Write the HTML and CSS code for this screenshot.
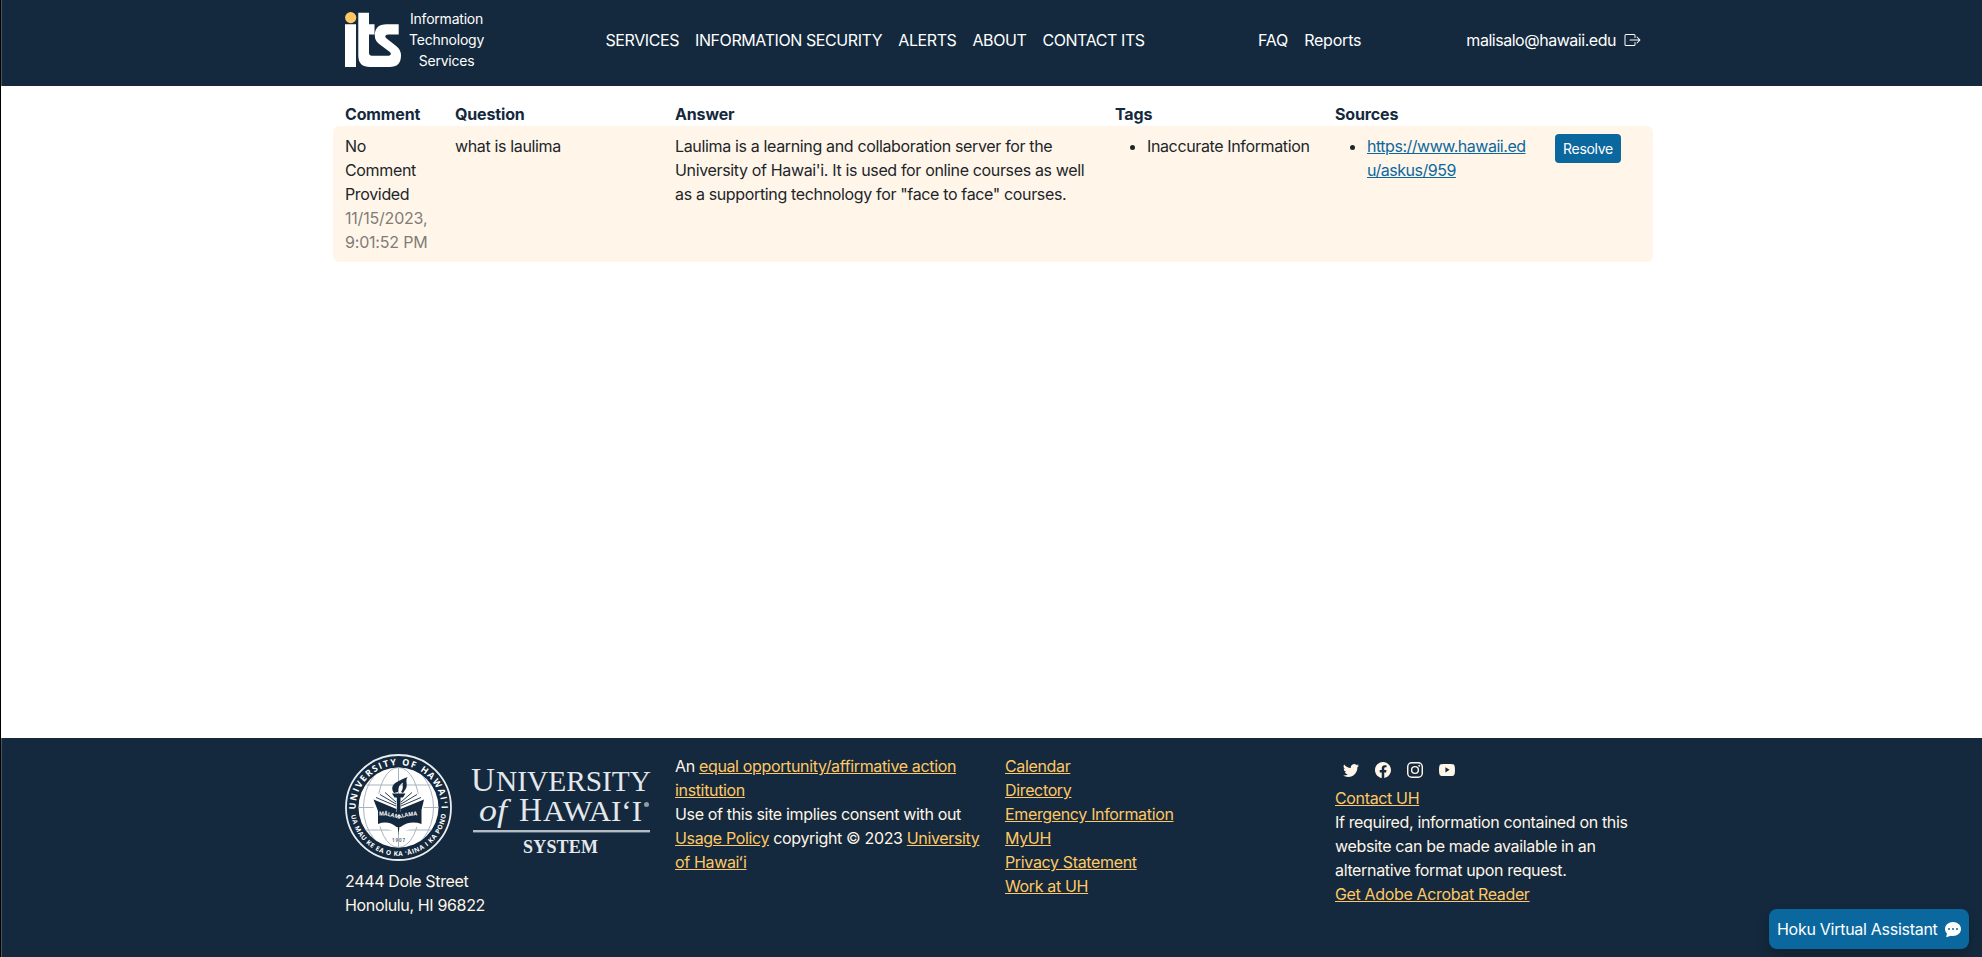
FILE: index.html
```html
<!DOCTYPE html>
<html lang="en">
<head>
<meta charset="utf-8">
<title>ITS Reports</title>
<link rel="stylesheet" href="styles.css">
</head>
<body>
<header class="site-header">
  <div class="container header-row">
    <a class="brand" href="#">
      <svg class="brand-logo" width="57" height="56" viewBox="0 0 57 56" aria-hidden="true">
        <circle cx="5.7" cy="5.6" r="5.6" fill="#ffc864"/>
        <path fill="#fff" d="M0 12.3H11V55H0zM13.3 0.7H24V12.3H29.5V22.5H24V40.5Q24 43.8 27 43.8H42.5Q45.8 43.8 45.8 41.8 45.8 40.8 44.5 39.8L33.5 31.5Q29.8 28.300 29.800 23.500 29.800 12.300 41.500 12.300H53.700V22.500H43.300Q40.300 22.500 40.300 24.500 40.300 25.600 41.600 26.600L51.500 34.200Q56 37.700 56 43.500 56 55 44.500 55H25Q13.300 55 13.300 43.500z"/>
      </svg>
      <span class="brand-text">Information<br>Technology<br>Services</span>
    </a>
    <nav class="main-nav">
      <a href="#">SERVICES</a><a href="#">INFORMATION SECURITY</a><a href="#">ALERTS</a><a href="#">ABOUT</a><a href="#">CONTACT ITS</a>
    </nav>
    <nav class="app-nav"><a href="#">FAQ</a><a href="#">Reports</a></nav>
    <div class="account">
      <span>malisalo@hawaii.edu</span>
      <svg width="17" height="16" viewBox="0 0 16 16" fill="#fff" aria-hidden="true">
        <path fill-rule="evenodd" d="M10 12.5a.5.5 0 0 1-.5.5h-8a.5.5 0 0 1-.5-.5v-9a.5.5 0 0 1 .5-.5h8a.5.5 0 0 1 .5.5v2a.5.5 0 0 0 1 0v-2A1.500 1.500 0 0 0 9.500 2h-8A1.500 1.500 0 0 0 0 3.500v9A1.500 1.500 0 0 0 1.500 14h8a1.500 1.500 0 0 0 1.500-1.500v-2a.5.5 0 0 0-1 0z"/>
        <path fill-rule="evenodd" d="M15.854 8.354a.5.5 0 0 0 0-.708l-3-3a.5.5 0 0 0-.708.708L14.293 7.500H5.500a.5.5 0 0 0 0 1h8.793l-2.147 2.146a.5.5 0 0 0 .708.708z"/>
      </svg>
    </div>
  </div>
</header>

<main class="container reports">
  <div class="report-grid report-head">
    <div>Comment</div><div>Question</div><div>Answer</div><div>Tags</div><div>Sources</div><div></div>
  </div>
  <div class="report-grid report-row">
    <div>No Comment Provided <span class="date">11/15/2023, 9:01:52 PM</span></div>
    <div>what is laulima</div>
    <div>Laulima is a learning and collaboration server for the University of Hawai'i. It is used for online courses as well as a supporting technology for "face to face" courses.</div>
    <div><ul><li>Inaccurate Information</li></ul></div>
    <div><ul><li><a href="#">https://www.hawaii.edu/askus/959</a></li></ul></div>
    <div><button class="resolve" type="button">Resolve</button></div>
  </div>
</main>

<footer class="site-footer">
  <div class="container footer-grid">
    <div class="uh">
      <svg class="uh-logo" width="306" height="107" viewBox="0 0 306 107" role="img" aria-label="University of Hawaii System">
        <defs>
          <path id="ring-top" d="M10.600 57A43 43 0 1 1 96.400 57"/>
          <path id="ring-bottom" d="M5.600 54A47.900 47.900 0 0 0 101.400 54"/>
          <clipPath id="disc"><circle cx="53.500" cy="53.500" r="40"/></clipPath>
        </defs>
        <circle cx="53.500" cy="53.500" r="52.500" fill="none" stroke="#e9edf0" stroke-width="1.800"/>
        <circle cx="53.500" cy="53.500" r="40" fill="#fff"/>
        <g fill="none" stroke="#a9b3bc" stroke-width="1" clip-path="url(#disc)">
          <ellipse cx="53.500" cy="53.500" rx="21" ry="40"/>
          <ellipse cx="53.500" cy="53.500" rx="35" ry="44"/>
          <path d="M53.500 13V94M13 53.500H94M18 31H89M18 76H89"/>
        </g>
        <path fill="#fff" d="M31 39L53 47 76 39 80 48 74 72 54 79 34 72 27 48z"/>
        <g fill="#14293d">
          <path d="M53.500 81L51.800 63V43.500H49.500L47 39.500H60.500L58 43.500H55.500V63z"/>
          <path d="M49 39C46 35 47 31 51 28.500 54 27 56 25.500 62.500 23 59.500 27.500 64 31 60 36L58 39 56 38C59 34 57 31 58 28.500 54 31 53 34 53 38z"/>
          <path d="M28.500 45.500L51.500 55V58L55.500 58V55L79 45.500 76.500 56V70Q65 66 55.500 73H51.500Q43 66 33 70V57z"/>
        </g>
        <path d="M31 43.500L51 52M35 40.500L51 50M40 38.500L51 48M76 43.500L56 52M72 40.500L56 50M67 38.500L56 48" stroke="#14293d" stroke-width=".9"/>
        <path id="banner" fill="none" d="M34 61.500Q43 61 54 65 64 61 75 61.500"/>
        <text class="ring-text motto"><textPath href="#banner" textLength="39" lengthAdjust="spacingAndGlyphs">MĀLAMALAMA</textPath></text>
        <text class="year" x="47" y="88" textLength="13">1907</text>
        <text class="ring-text top"><textPath href="#ring-top" startOffset="1.500" textLength="137" lengthAdjust="spacing">UNIVERSITY OF HAWAIʻI</textPath></text>
        <text class="ring-text bottom"><textPath href="#ring-bottom" startOffset="7" textLength="137" lengthAdjust="spacing">UA MAU KE EA O KA ʻĀINA I KA PONO</textPath></text>
        <g class="wordmark">
          <text y="37"><tspan x="126" font-size="34" textLength="24" lengthAdjust="spacingAndGlyphs">U</tspan><tspan x="151" font-size="29" textLength="155" lengthAdjust="spacingAndGlyphs">NIVERSITY</tspan></text>
          <text y="67"><tspan x="134" font-size="31" font-style="italic" textLength="28" lengthAdjust="spacingAndGlyphs">of</tspan><tspan x="174" font-size="34" textLength="23" lengthAdjust="spacingAndGlyphs">H</tspan><tspan x="198" font-size="29" textLength="99" lengthAdjust="spacingAndGlyphs">AWAIʻI</tspan></text>
          <text x="178" y="99" font-size="18" font-weight="700" textLength="75" lengthAdjust="spacing">SYSTEM</text>
        </g>
        <rect x="128" y="76" width="177" height="2.400" fill="#b4bdc6"/>
        <circle cx="301.500" cy="50.500" r="2.500" fill="#8f9ba6"/>
      </svg>
      <div>2444 Dole Street<br>Honolulu, HI 96822</div>
    </div>
    <div>An <a href="#">equal opportunity/affirmative action institution</a><br>Use of this site implies consent with out <a href="#">Usage Policy</a> copyright © 2023 <a href="#">University of Hawaiʻi</a></div>
    <div class="links"><a href="#">Calendar</a><a href="#">Directory</a><a href="#">Emergency Information</a><a href="#">MyUH</a><a href="#">Privacy Statement</a><a href="#">Work at UH</a></div>
    <div>
      <div class="social">
        <svg viewBox="0 0 16 16"><path d="M5.026 15c6.038 0 9.341-5.003 9.341-9.334 0-.14 0-.282-.006-.422A6.685 6.685 0 0 0 16 3.542a6.658 6.658 0 0 1-1.889.518 3.301 3.301 0 0 0 1.447-1.817 6.533 6.533 0 0 1-2.087.793A3.286 3.286 0 0 0 7.875 6.030a9.325 9.325 0 0 1-6.767-3.429 3.289 3.289 0 0 0 1.018 4.382A3.323 3.323 0 0 1 .640 6.575v.045a3.288 3.288 0 0 0 2.632 3.218 3.203 3.203 0 0 1-.865.115 3.230 3.230 0 0 1-.614-.057 3.283 3.283 0 0 0 3.067 2.277A6.588 6.588 0 0 1 .780 13.580a6.320 6.320 0 0 1-.780-.045A9.344 9.344 0 0 0 5.026 15z"/></svg>
        <svg viewBox="0 0 16 16"><path d="M16 8.049c0-4.446-3.582-8.050-8-8.050C3.580 0-.002 3.603-.002 8.050c0 4.017 2.926 7.347 6.750 7.951v-5.625h-2.030V8.050H6.750V6.275c0-2.017 1.195-3.131 3.022-3.131.876 0 1.791.157 1.791.157v1.980h-1.009c-.993 0-1.303.621-1.303 1.258v1.510h2.218l-.354 2.326H9.250V16c3.824-.604 6.750-3.934 6.750-7.951z"/></svg>
        <svg viewBox="0 0 16 16"><path fill-rule="evenodd" d="M4.700 0H11.300A4.700 4.700 0 0 1 16 4.700V11.300A4.700 4.700 0 0 1 11.300 16H4.700A4.700 4.700 0 0 1 0 11.300V4.700A4.700 4.700 0 0 1 4.700 0ZM4.700 1.450A3.250 3.250 0 0 0 1.450 4.700V11.300A3.250 3.250 0 0 0 4.700 14.550H11.300A3.250 3.250 0 0 0 14.550 11.300V4.700A3.250 3.250 0 0 0 11.300 1.450ZM8 3.890A4.110 4.110 0 1 1 8 12.110A4.110 4.110 0 1 1 8 3.890ZM8 5.330A2.670 2.670 0 1 0 8 10.670A2.670 2.670 0 1 0 8 5.330Z"/><circle cx="12.270" cy="3.730" r=".96"/></svg>
        <svg viewBox="0 0 16 16"><path fill-rule="evenodd" d="M8 2C11 2 13.100 2.100 14.100 2.370A2 2 0 0 1 15.520 3.800C15.900 5.100 16 6.600 16 8S15.900 10.900 15.520 12.200A2 2 0 0 1 14.100 13.630C13.100 13.900 11 14 8 14S2.900 13.900 1.900 13.630A2 2 0 0 1 .480 12.200C.100 10.900 0 9.400 0 8S.100 5.100 .480 3.800A2 2 0 0 1 1.900 2.370C2.900 2.100 5 2 8 2ZM6.400 5.200V10.380L10.560 7.790Z"/></svg>
      </div>
      <a href="#">Contact UH</a><br>If required, information contained on this website can be made available in an alternative format upon request.<br><a href="#">Get Adobe Acrobat Reader</a>
    </div>
  </div>
</footer>

<button class="assistant" type="button"><span>Hoku Virtual Assistant</span>
  <svg width="16" height="16" viewBox="0 0 16 16" fill="#fff"><path d="M16 8c0 3.866-3.582 7-8 7a9.060 9.060 0 0 1-2.347-.306c-.584.296-1.925.864-4.181 1.234-.200.032-.352-.176-.273-.362.354-.836.674-1.950.770-2.966C.744 11.370 0 9.760 0 8c0-3.866 3.582-7 8-7s8 3.134 8 7zM5 8a1 1 0 1 0-2 0 1 1 0 0 0 2 0zm4 0a1 1 0 1 0-2 0 1 1 0 0 0 2 0zm3 1a1 1 0 1 0 0-2 1 1 0 0 0 0 2z"/></svg>
</button>
</body>
</html>
```
FILE: styles.css
```css
* { box-sizing: border-box; }

body {
  margin: 0;
  height: 957px;
  display: flex;
  flex-direction: column;
  border-left: 1px solid #000;
  background: #fff;
  color: #212529;
  font: 400 16px/24px Inter, "Liberation Sans", sans-serif;
  letter-spacing: -0.35px;
}

.container {
  width: 1320px;
  margin-left: 332px;
}

.site-header {
  height: 86px;
  flex: none;
  background: #14293d;
  border-left: 1px solid #4a5862;
  color: #fff;
}

.site-header .container, .site-footer .container { margin-left: 331px; }
.site-header a { color: #fff; text-decoration: none; }

.header-row {
  display: flex;
  align-items: center;
  height: 80px;
  padding: 0 12px;
}

.brand { display: flex; width: 260px; gap: 7px; align-items: center; }
.brand-text { margin-top: -2px; font-size: 14px; line-height: 21px; text-align: center; letter-spacing: -0.22px; }
.main-nav { display: flex; gap: 16px; width: 653px; padding-left: 0.5px; white-space: nowrap; letter-spacing: -0.41px; }
.app-nav { display: flex; gap: 16px; letter-spacing: -0.2px; }
.account { display: flex; align-items: center; gap: 8px; margin-left: auto; letter-spacing: -0.47px; }

.reports { flex: none; height: 652px; padding-top: 16px; }
.report-grid { display: grid; grid-template-columns: 1fr 2fr 4fr 2fr 2fr 1fr; }
.report-grid > div { padding: 0 12px; min-width: 0; }
.report-head { font-weight: 700; color: #14293d; letter-spacing: -0.15px; }
.report-row { background: #fff6e9; border-radius: 6px; padding: 8px 0; }
.report-row ul { margin: 0; padding-left: 32px; }
.report-row li { letter-spacing: -0.37px; }
.report-row a { color: #0b689f; word-break: break-all; letter-spacing: -0.48px; }
.date { color: #7f7c78; letter-spacing: -0.2px; }

.resolve {
  display: block;
  height: 29px;
  width: 66px;
  padding: 0;
  border: 0;
  border-radius: 4px;
  background: #0b689f;
  color: #fff;
  font: 400 14px/21px Inter, sans-serif;
  letter-spacing: -0.3px;
}

.site-footer {
  flex: none;
  height: 219px;
  padding-top: 16px;
  background: #14293d;
  border-left: 1px solid #4a5862;
  color: #fff6e9;
}
.site-footer a { color: #ffc864; }
.footer-grid { display: grid; grid-template-columns: repeat(4, 1fr); }
.footer-grid > div { padding: 0 12px; min-width: 0; }
.uh-logo { display: block; margin-bottom: 8px; }
.links { display: flex; flex-direction: column; align-items: flex-start; }
.social { display: flex; gap: 16px; padding: 8px; }
.social svg { width: 16px; height: 16px; fill: #fff6e9; }

.ring-text { font-family: "Open Sans", sans-serif; font-weight: 700; fill: #fff; letter-spacing: 0; }
.top { font-size: 9px; }
.bottom { font-size: 6.5px; }
.motto { font-size: 5.5px; }
.year { font: 700 4.500px "Open Sans", sans-serif; letter-spacing: 0; fill: #66727d; }
.wordmark { font-family: "Liberation Serif", serif; fill: #e4e8ec; letter-spacing: 0; }

.assistant {
  position: absolute;
  top: 909px;
  right: 13px;
  display: flex;
  align-items: center;
  justify-content: space-between;
  width: 200px;
  height: 40px;
  padding: 0 8px;
  border: 0;
  border-radius: 8px;
  background: #0b689f;
  color: #fff;
  font: 400 16px/24px Inter, sans-serif;
  letter-spacing: -0.28px;
  white-space: nowrap;
  box-shadow: 0 6px 12px rgba(0, 0, 0, .2);
}
```
